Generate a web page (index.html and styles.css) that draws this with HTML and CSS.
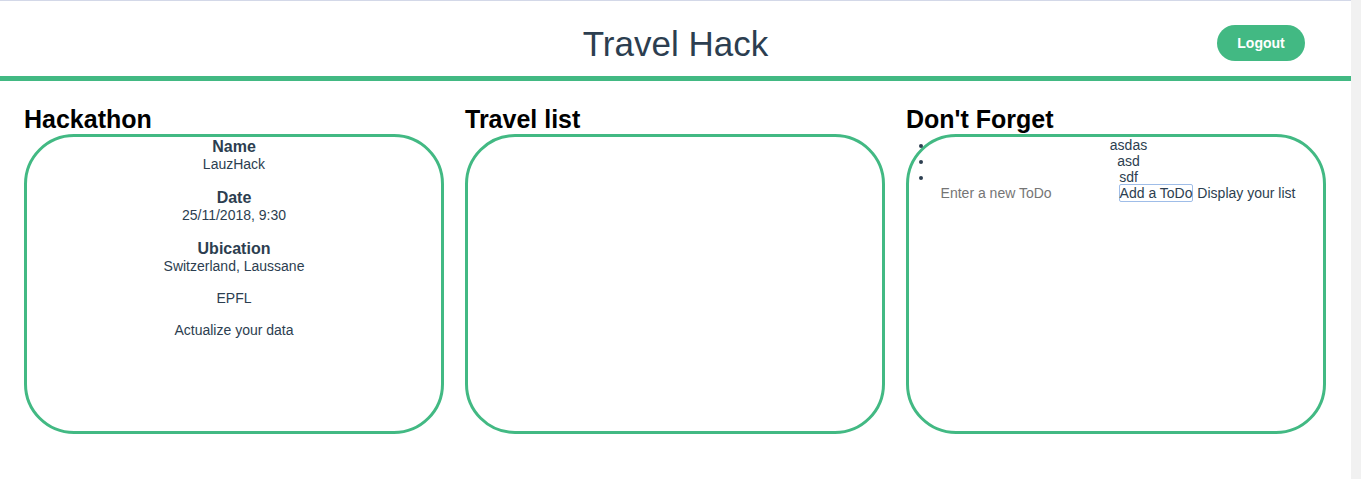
FILE: index.html
```html
<!DOCTYPE html>
<html>
<head>
    <meta charset="UTF-8">
    <meta name="viewport" content="width=device-width,initial-scale=1.0">
    <title>Travel Hack</title>
    <link rel="stylesheet" href="styles.css">
</head>
<body>
    <header class="topbar">
        <div></div>
        <h1 class="title">Travel Hack</h1>
        <button class="logout">Logout</button>
    </header>
    <main class="columns">
        <section class="panel">
            <h2 class="panel-title">Hackathon</h2>
            <div class="card">
                <div class="field">
                    <div class="field-label">Name</div>
                    <div class="field-value">LauzHack</div>
                </div>
                <div class="field">
                    <div class="field-label">Date</div>
                    <div class="field-value">25/11/2018, 9:30</div>
                </div>
                <div class="field">
                    <div class="field-label">Ubication</div>
                    <div class="field-value">Switzerland, Laussane</div>
                </div>
                <p class="line">EPFL</p>
                <p class="line">Actualize your data</p>
            </div>
        </section>
        <section class="panel">
            <h2 class="panel-title">Travel list</h2>
            <div class="card"></div>
        </section>
        <section class="panel">
            <h2 class="panel-title">Don't Forget</h2>
            <div class="card">
                <ul class="todo-list">
                    <li>asdas</li>
                    <li>asd</li>
                    <li>sdf</li>
                </ul>
                <div class="todo-form"><input type="text" class="todo-input" placeholder="Enter a new ToDo"><button class="todo-add">Add a ToDo</button> Display your list</div>
            </div>
        </section>
    </main>
</body>
</html>
```

FILE: styles.css
```css
/* the strip on the right stands for the page scrollbar */
html{background-color: #f1f1f1;}
body{margin: 0 10px 0 0;min-height: 100vh;background-color: #fff;font-family: "Liberation Sans", Arial, sans-serif;color: #2c3e50;}
.topbar{display: grid;grid-template-columns: 1fr auto 1fr;align-items: start;height: 75px;border-top: 1px solid #d3d8e8;border-bottom: 5px solid #42b983;}
.title{margin: 23px 0 0;font-size: 35px;font-weight: normal;line-height: normal;}
.logout{justify-self: end;margin: 24px 46px 0 0;width: 88px;height: 36px;border: none;border-radius: 18px;background-color: #42b983;color: #fff;font-family: inherit;font-size: 14px;font-weight: bold;}
.columns{display: grid;grid-template-columns: repeat(3, 420px);column-gap: 21px;padding: 24px 0 80px 24px;}
.panel-title{margin: 0;font-size: 25px;line-height: normal;color: #000;}
.card{box-sizing: border-box;height: 300px;border: 3px solid #42b983;border-radius: 50px;padding-top: 1px;text-align: center;font-size: 14px;}
.field{margin-bottom: 17px;}
.field:last-of-type{margin-bottom: 16px;}
.field-label{font-size: 16px;font-weight: bold;}
.line{margin: 0 0 16px;}
.todo-list{margin: -1px 0 0;padding-left: 25px;}
.todo-form{margin-top: -1px;}
.todo-input{box-sizing: border-box;width: 182px;padding: 0 4px;border: 0;font-family: inherit;font-size: 14px;color: #2c3e50;}
.todo-add{padding: 0;border: 1px solid #9fbde8;border-radius: 2px;background: #fff;font-family: inherit;font-size: 14px;color: #2c3e50;}
```
